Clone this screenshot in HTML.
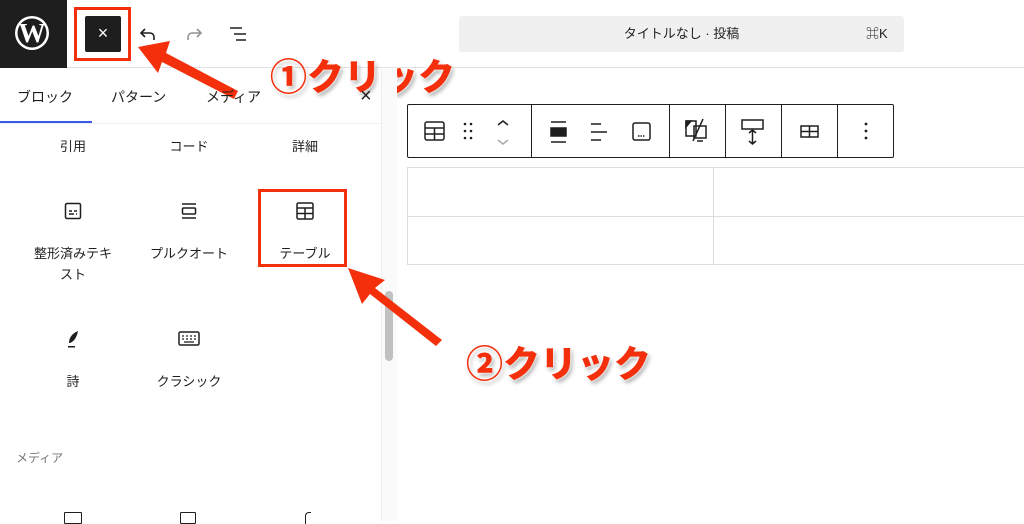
<!DOCTYPE html><html><head><meta charset="utf-8"><style>
*{margin:0;padding:0;box-sizing:border-box}
body{width:1024px;height:521px;overflow:hidden;background:#fff;font-family:"Liberation Sans","Noto Sans CJK JP",sans-serif;color:#1e1e1e;position:relative}
.a{position:absolute}
.lbl{position:absolute;font-size:13px;text-align:center;width:100px;line-height:21px}
.big{position:absolute;font-size:37px;font-weight:900;color:#f4300c;text-shadow:0 0 3px #fff,0 0 3px #fff,2px 3px 4px rgba(0,0,0,.35);letter-spacing:0}
.sep{position:absolute;top:104px;width:1px;height:53px;background:#1e1e1e}
</style></head><body>
<div class="a" style="left:0;top:0;width:1024px;height:68px;border-bottom:1px solid #e0e0e0"></div>
<div class="a" style="left:0;top:0;width:67px;height:68px;background:#1e1e1e"></div>
<svg class="a" style="left:13px;top:14px" width="38" height="38" viewBox="0 0 38 38"><circle cx="19" cy="19" r="17" fill="#fff"/><circle cx="19" cy="19" r="14.5" fill="#1e1e1e"/><text x="19" y="28" text-anchor="middle" font-family="Liberation Serif" font-size="27" font-weight="bold" fill="#fff">W</text></svg>
<div class="a" style="left:85px;top:16px;width:36px;height:36px;background:#1e1e1e;border-radius:2px;color:#fff;font-size:18px;text-align:center;line-height:35px">×</div>
<div class="a" style="left:74px;top:7px;width:57px;height:54px;border:3px solid #f4300c"></div>
<svg class="a" style="left:136px;top:22px" width="24" height="24" viewBox="0 0 24 24" fill="none" stroke="#1e1e1e" stroke-width="1.6"><path d="M9 7 5 11l4 4M5 11h9a4 4 0 0 1 4 4v3"/></svg>
<svg class="a" style="left:182px;top:22px" width="24" height="24" viewBox="0 0 24 24" fill="none" stroke="#949494" stroke-width="1.6"><path d="M15 7l4 4-4 4M19 11h-9a4 4 0 0 0-4 4v3"/></svg>
<svg class="a" style="left:227px;top:22px" width="24" height="24" viewBox="0 0 24 24" stroke="#1e1e1e" stroke-width="1.6"><path d="M3 6h12M7 12h12M9 18h10"/></svg>
<div class="a" style="left:459px;top:16px;width:445px;height:36px;background:#f0f0f0;border-radius:3px;font-size:13px;line-height:36px;text-align:center">タイトルなし · 投稿</div>
<div class="a" style="left:866px;top:16px;font-size:13px;line-height:36px">⌘K</div>
<svg class="a" style="left:130px;top:35px" width="120" height="70"><path d="M8 12 L40 6 L36 18 L108 56 L104 64 L32 27 L28 38 Z" fill="#f4300c"/></svg>
<div class="big" style="left:270px;top:47px">①クリック</div>
<div class="a" style="left:0;top:69px;width:397px;height:452px;border-right:1px solid #e0e0e0"></div>
<div class="a" style="left:17px;top:86px;font-size:14px;line-height:22px">ブロック</div>
<div class="a" style="left:111px;top:86px;font-size:14px;line-height:22px">パターン</div>
<div class="a" style="left:206px;top:86px;font-size:14px;line-height:22px">メディア</div>
<div class="a" style="left:360px;top:84px;font-size:20px;line-height:24px">×</div>
<div class="a" style="left:0;top:121px;width:92px;height:2px;background:#3858e9"></div>
<div class="a" style="left:0;top:123px;width:380px;height:1px;background:#f0f0f0"></div>
<div class="lbl" style="left:23px;top:136px">引用</div>
<div class="lbl" style="left:139px;top:136px">コード</div>
<div class="lbl" style="left:255px;top:136px">詳細</div>
<svg class="a" style="left:63px;top:201px" width="20" height="20" viewBox="0 0 20 20" fill="none" stroke="#1e1e1e" stroke-width="1.5"><rect x="2.5" y="2.5" width="15" height="15" rx="1.5"/><path d="M6 10h3M11 10h3M6 13h5M13 13h1"/></svg>
<div class="lbl" style="left:23px;top:243px">整形済みテキ<br>スト</div>
<svg class="a" style="left:179px;top:201px" width="20" height="20" viewBox="0 0 20 20" fill="none" stroke="#1e1e1e" stroke-width="1.5"><path d="M3 3h14M3 17h14"/><rect x="3.5" y="7" width="13" height="6" rx="1"/></svg>
<div class="lbl" style="left:139px;top:243px">プルクオート</div>
<svg class="a" style="left:294px;top:200px" width="22" height="22" viewBox="0 0 22 22" fill="none" stroke="#1e1e1e" stroke-width="1.5"><rect x="3" y="3" width="16" height="16" rx="1.5"/><path d="M3 8h16M3 13.5h16M11 8v11"/></svg>
<div class="lbl" style="left:255px;top:243px">テーブル</div>
<div class="a" style="left:258px;top:189px;width:89px;height:78px;border:3px solid #f4300c"></div>
<svg class="a" style="left:63px;top:328px" width="20" height="22" viewBox="0 0 20 22" fill="#1e1e1e"><path d="M6 15c0-6 4-10 9-12-1 5-3 10-8 12z"/><rect x="5" y="18" width="7" height="1.5"/></svg>
<div class="lbl" style="left:23px;top:371px">詩</div>
<svg class="a" style="left:177px;top:330px" width="24" height="18" viewBox="0 0 24 18" fill="none" stroke="#1e1e1e" stroke-width="1.5"><rect x="2" y="2" width="20" height="13" rx="1.5"/><path d="M5 6h2M9 6h2M13 6h2M17 6h2M5 9h2M9 9h2M13 9h2M17 9h2M7 12h10" stroke-width="1.3"/></svg>
<div class="lbl" style="left:139px;top:371px">クラシック</div>
<div class="a" style="left:16px;top:449px;font-size:12px;color:#757575">メディア</div>
<div class="a" style="left:64px;top:512px;width:18px;height:12px;border:1.5px solid #1e1e1e;border-radius:1px"></div>
<div class="a" style="left:180px;top:512px;width:16px;height:12px;border:1.5px solid #1e1e1e;border-radius:1px"></div>
<div class="a" style="left:305px;top:512px;width:6px;height:12px;border-left:1.5px solid #1e1e1e;border-top:1.5px solid #1e1e1e;border-radius:4px 0 0 0"></div>
<div class="a" style="left:381px;top:69px;width:16px;height:452px;background:#fafafa;border-left:1px solid #eee"></div>
<div class="a" style="left:385px;top:291px;width:8px;height:70px;background:#c1c1c1;border-radius:4px"></div>
<div class="a" style="left:407px;top:104px;width:487px;height:54px;border:1px solid #1e1e1e;border-radius:2px"></div>
<div class="sep" style="left:531px"></div><div class="sep" style="left:669px"></div><div class="sep" style="left:725px"></div><div class="sep" style="left:781px"></div><div class="sep" style="left:837px"></div>
<svg class="a" style="left:407px;top:104px" width="487" height="54" viewBox="0 0 487 54" fill="none" stroke="#1e1e1e" stroke-width="1.5">
<rect x="18" y="18" width="19" height="18" rx="2"/><path d="M18 24h19M18 30h19M27.5 24v12"/>
<g fill="#1e1e1e" stroke="none"><circle cx="58" cy="20" r="1.3"/><circle cx="64" cy="20" r="1.3"/><circle cx="58" cy="27" r="1.3"/><circle cx="64" cy="27" r="1.3"/><circle cx="58" cy="34" r="1.3"/><circle cx="64" cy="34" r="1.3"/></g>
<path d="M91 21l5-4 5 4"/><path d="M91 36l5 4 5-4" stroke="#aaa"/>
<path d="M144 18h15M144 38h15"/><rect x="144" y="24" width="15" height="8" fill="#1e1e1e"/>
<path d="M184 20h10M184 28h16M184 36h10"/>
<rect x="226" y="19" width="17" height="17" rx="2"/><path d="M231 32h7" stroke-dasharray="1.5 1"/>
<rect x="279" y="17" width="10" height="15"/><path d="M279 17l5 0-5 6z" fill="#1e1e1e"/><rect x="287" y="22" width="12" height="12"/><path d="M290 37h6M296 15l-10 22"/>
<rect x="335" y="16" width="21" height="9"/><path d="M345.5 26v14M342 29l3.5-3 3.5 3M342 37l3.5 3 3.5-3"/>
<rect x="394" y="22" width="17" height="11"/><path d="M394 27.5h17M402.5 22v11"/>
<g fill="#1e1e1e" stroke="none"><circle cx="459" cy="20" r="1.4"/><circle cx="459" cy="27" r="1.4"/><circle cx="459" cy="34" r="1.4"/></g>
</svg>
<div class="a" style="left:407px;top:167px;width:617px;height:98px;border:1px solid #ddd;border-right:none"></div>
<div class="a" style="left:713px;top:167px;width:1px;height:98px;background:#ddd"></div>
<div class="a" style="left:407px;top:216px;width:617px;height:1px;background:#ddd"></div>
<svg class="a" style="left:340px;top:262px" width="110" height="90"><path d="M8 6 L45 18 L35 26 L102 78 L96 84 L30 32 L22 42 Z" fill="#f4300c"/></svg>
<div class="big" style="left:466px;top:334px">②クリック</div>
</body></html>
